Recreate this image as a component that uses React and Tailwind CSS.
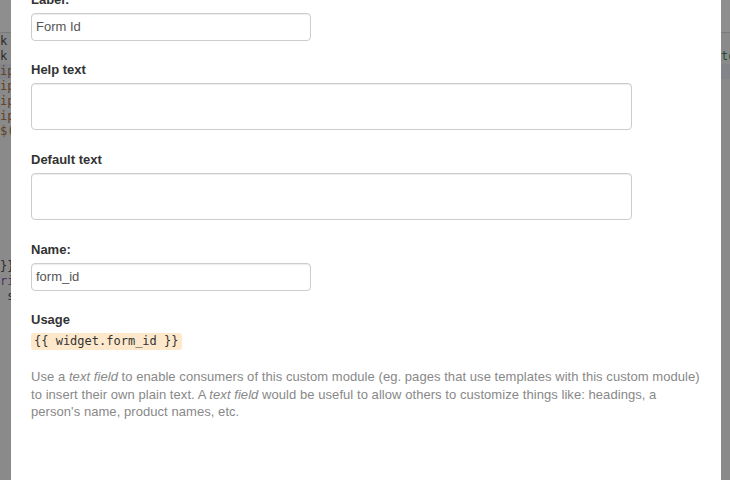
import React from 'react';

// lines of the code editor that peek out from under the modal
const leftLines = [
    { t: 'k', c: 'text-[#2a2a2a]' },
    { t: 'k', c: 'text-[#2a2a2a]' },
    { t: 'ip', c: 'text-[#5c4126]', hi: true },
    { t: 'ip', c: 'text-[#5c4126]' },
    { t: 'ip', c: 'text-[#5c4126]' },
    { t: 'ip', c: 'text-[#5c4126]' },
    { t: '$(', c: 'text-[#5c4126]' },
    { t: '' }, { t: '' }, { t: '' }, { t: '' },
    { t: '' }, { t: '' }, { t: '' }, { t: '' },
    { t: '}}', c: 'text-[#2a2a2a]' },
    { t: 'ri', c: 'text-[#4a3560]' },
    { t: '\u00a0s', c: 'text-[#2a2a2a]' },
];

const rightLines = [
    { t: '' },
    { t: 'to', c: 'text-[#1f4a3c]' },
    { t: '', hi: true },
];

function CodeStrip({ lines, width }) {
    return (
        <div className={`${width} shrink-0 h-full bg-[#8a8a8a] overflow-hidden`}>
            <div className="h-[33px] bg-[#8e8e8e] border-b border-[#7a7a7a]" />
            <div className="pt-[1px]">
                {lines.map((l, i) => (
                    <div
                        key={i}
                        className={`h-[15px] leading-[15px] text-[12px] whitespace-nowrap ${l.c || ''} ${l.hi ? 'bg-[#828489]' : ''}`}
                        style={{ fontFamily: '"DejaVu Sans Mono", monospace' }}
                    >
                        {l.t}
                    </div>
                ))}
            </div>
        </div>
    );
}

function Label({ children, className = '' }) {
    return (
        <div className={`text-[13px] leading-[18px] font-bold text-[#333] mb-[4px] ${className}`}>
            {children}
        </div>
    );
}

const fieldCls = 'block border border-[#cccccc] rounded-[4px] bg-white shadow-[inset_0_1px_1px_rgba(0,0,0,0.075)]';

export default function App() {
    return (
        <div
            className="flex w-[730px] h-[480px] overflow-hidden bg-[#8a8a8a]"
            style={{ fontFamily: '"Liberation Sans", Arial, sans-serif' }}
        >
            <CodeStrip lines={leftLines} width="w-[11px]" />

            <div className="w-[710px] shrink-0 h-full bg-white px-[20px] overflow-hidden">
                <Label className="-mt-[9px]">Label:</Label>
                <div className={`${fieldCls} w-[280px] h-[28px] px-[4px] text-[13px] leading-[26px] text-[#555]`}>
                    Form Id
                </div>

                <Label className="mt-[20px]">Help text</Label>
                <div className={`${fieldCls} w-[601px] h-[47px]`} />

                <Label className="mt-[21px]">Default text</Label>
                <div className={`${fieldCls} w-[601px] h-[47px]`} />

                <Label className="mt-[21px]">Name:</Label>
                <div className={`${fieldCls} w-[280px] h-[28px] px-[4px] text-[13px] leading-[26px] text-[#555]`}>
                    form_id
                </div>

                <Label className="mt-[20px]">Usage</Label>
                <div className="w-fit h-[17px] px-[3px] rounded-[3px] bg-[#fde8cc] text-[12px] leading-[17px] text-[#333]"
                    style={{ fontFamily: '"DejaVu Sans Mono", monospace' }}
                >
                    {'{{ widget.form_id }}'}
                </div>

                <p className="mt-[18px] text-[13px] leading-[17.5px] tracking-[0.06px] text-[#888] whitespace-nowrap">
                    Use a <em>text field</em> to enable consumers of this custom module (eg. pages that use templates with this custom module)
                    <br />
                    to insert their own plain text. A <em>text field</em> would be useful to allow others to customize things like: headings, a
                    <br />
                    person's name, product names, etc.
                </p>
            </div>

            <CodeStrip lines={rightLines} width="w-[9px]" />
        </div>
    );
}
